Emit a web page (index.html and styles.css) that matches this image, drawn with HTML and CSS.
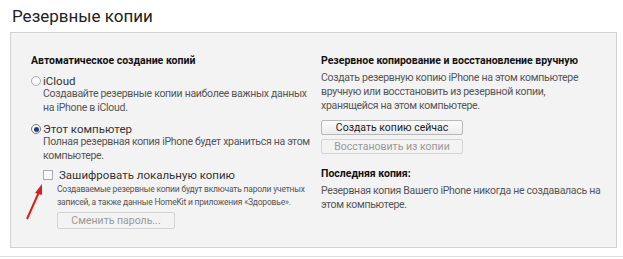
FILE: index.html
```html
<!DOCTYPE html>
<html lang="ru">
<head>
	<meta charset="UTF-8">
	<title>Резервные копии</title>
	<link rel="stylesheet" href="styles.css">
</head>
<body>
<h1 class="title">Резервные копии</h1>
<div class="panel">
	<div class="col left">
		<h2>Автоматическое создание копий</h2>
		<label class="radio"><span class="dot"></span>iCloud</label>
		<p class="desc">Создавайте резервные копии наиболее важных данных на iPhone в iCloud.</p>
		<label class="radio second"><span class="dot on"></span>Этот компьютер</label>
		<p class="desc">Полная резервная копия iPhone будет храниться на этом компьютере.</p>
		<div class="encrypt">
			<label class="check"><span class="box"></span>Зашифровать локальную копию</label>
			<p class="small">Создаваемые резервные копии будут включать пароли учетных записей, а также данные HomeKit и приложения «Здоровье».</p>
			<button class="btn wide" disabled>Сменить пароль...</button>
			<svg class="arrow" width="20" height="38" viewBox="0 0 20 38">
				<path d="M2 36 L14 9" stroke="#d42020" stroke-width="2" fill="none"/>
				<path d="M17 1 L10 10 L17 12 Z" fill="#d42020"/>
			</svg>
		</div>
	</div>
	<div class="col right">
		<h2>Резервное копирование и восстановление вручную</h2>
		<p class="text narrow">Создать резервную копию iPhone на этом компьютере вручную или восстановить из резервной копии, хранящейся на этом компьютере.</p>
		<button class="btn first">Создать копию сейчас</button>
		<button class="btn" disabled>Восстановить из копии</button>
		<h2 class="last">Последняя копия:</h2>
		<p class="text">Резервная копия Вашего iPhone никогда не создавалась на этом компьютере.</p>
	</div>
</div>
<div class="rule"></div>
</body>
</html>
```
FILE: styles.css
```css
body {
	margin: 0;
	background: #fff;
	font-family: Roboto, "Noto Sans", sans-serif;
	font-size: 10.5px;
	color: #555;
	width: 623px;
	height: 259px;
	overflow: hidden;
}

.title {
	font-size: 17px;
	font-weight: normal;
	color: #222;
	margin: 0;
	padding: 6px 0 0 12px;
	height: 26px;
	line-height: 20px;
	box-sizing: content-box;
}

.panel {
	margin-left: 10px;
	width: 607px;
	height: 216px;
	background: #f3f3f3;
	border: 1px solid #d2d2d2;
	display: flex;
	box-sizing: border-box;
	padding: 21px 0 0 20px;
}

.col { line-height: 14px; }
.left { width: 290px; flex-shrink: 0; }
.right { width: 292px; flex-shrink: 0; }

h2 {
	font-size: 10.5px;
	font-weight: bold;
	color: #111;
	margin: 0;
}

.radio {
	display: flex;
	align-items: center;
	color: #333;
	font-size: 11.5px;
	line-height: 12px;
	margin-top: 7px;
}

.radio.second { margin-top: 8px; }

.dot {
	width: 10px;
	height: 10px;
	border: 1px solid #aaa;
	border-radius: 50%;
	background: #fafafa;
	margin-right: 2px;
	box-sizing: border-box;
	position: relative;
}

.dot.on { border-color: #777; }
.dot.on::after {
	content: "";
	position: absolute;
	left: 1.5px;
	top: 1.5px;
	width: 5px;
	height: 5px;
	border-radius: 50%;
	background: #1e3f7a;
}

.desc {
	margin: 0 0 0 12px;
	width: 276px;
	letter-spacing: -0.3px;
}

.encrypt {
	margin: 6px 0 0 12px;
	position: relative;
}

.check {
	display: flex;
	align-items: center;
	color: #333;
	font-size: 11.5px;
	line-height: 12px;
}

.box {
	width: 10px;
	height: 10px;
	border: 1px solid #aaa;
	background: #fafafa;
	margin-right: 6px;
	box-sizing: border-box;
}

.small {
	font-size: 8.5px;
	line-height: 13px;
	margin: 2px 0 3px 14px;
	width: 252px;
	letter-spacing: -0.2px;
	color: #555;
}

.btn {
	display: block;
	font-family: inherit;
	font-size: 10.5px;
	color: #222;
	background: linear-gradient(#fbfbfb, #ececec);
	border: 1px solid #b8b8b8;
	border-radius: 2px;
	height: 15px;
	width: 142px;
	padding: 0;
	line-height: 13px;
	margin-bottom: 4px;
}

.btn:disabled {
	color: #999;
	background: #f3f3f3;
	border-color: #d4d4d4;
}

.btn.first { margin-top: 7px; }

.wide {
	margin-left: 14px;
	width: 118px;
	height: 17px;
}

.arrow {
	position: absolute;
	left: -18px;
	top: 14px;
}

.text {
	margin: 3px 0 0;
	letter-spacing: -0.3px;
}

.narrow { width: 272px; }

.last { margin-top: 13px; }

.rule {
	margin-top: 8px;
	border-top: 1px solid #ddd;
}
```
